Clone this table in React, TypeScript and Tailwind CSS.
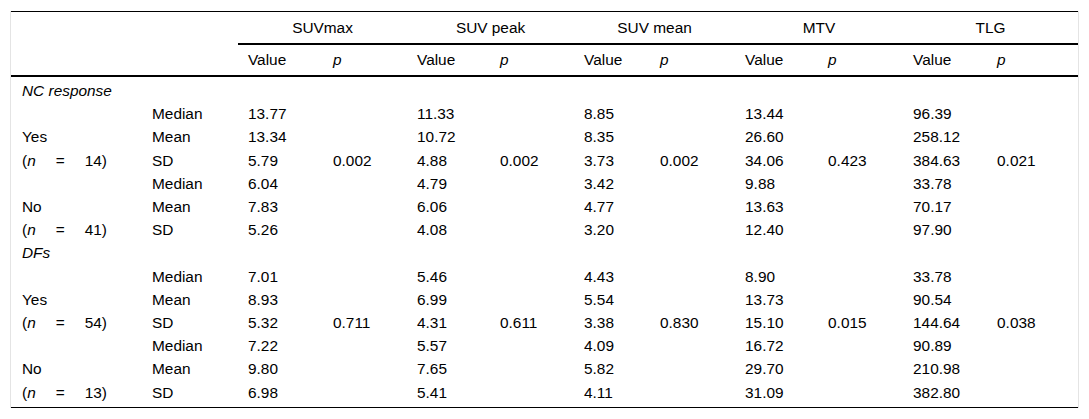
import React from "react";

type Row = { label?: React.ReactNode; stat: string; values: string[]; p?: string[] };

const N = ({ n }: { n: string }) => (
  <span className="inline-flex gap-5">
    <span>
      (<i>n</i>
    </span>
    <span>=</span>
    <span>{n})</span>
  </span>
);

const sections: { title: string; rows: Row[] }[] = [
  {
    title: "NC response",
    rows: [
      { stat: "Median", values: ["13.77", "11.33", "8.85", "13.44", "96.39"] },
      { label: "Yes", stat: "Mean", values: ["13.34", "10.72", "8.35", "26.60", "258.12"] },
      {
        label: <N n="14" />,
        stat: "SD",
        values: ["5.79", "4.88", "3.73", "34.06", "384.63"],
        p: ["0.002", "0.002", "0.002", "0.423", "0.021"],
      },
      { stat: "Median", values: ["6.04", "4.79", "3.42", "9.88", "33.78"] },
      { label: "No", stat: "Mean", values: ["7.83", "6.06", "4.77", "13.63", "70.17"] },
      { label: <N n="41" />, stat: "SD", values: ["5.26", "4.08", "3.20", "12.40", "97.90"] },
    ],
  },
  {
    title: "DFs",
    rows: [
      { stat: "Median", values: ["7.01", "5.46", "4.43", "8.90", "33.78"] },
      { label: "Yes", stat: "Mean", values: ["8.93", "6.99", "5.54", "13.73", "90.54"] },
      {
        label: <N n="54" />,
        stat: "SD",
        values: ["5.32", "4.31", "3.38", "15.10", "144.64"],
        p: ["0.711", "0.611", "0.830", "0.015", "0.038"],
      },
      { stat: "Median", values: ["7.22", "5.57", "4.09", "16.72", "90.89"] },
      { label: "No", stat: "Mean", values: ["9.80", "7.65", "5.82", "29.70", "210.98"] },
      { label: <N n="13" />, stat: "SD", values: ["6.98", "5.41", "4.11", "31.09", "382.80"] },
    ],
  },
];

const groups = ["SUVmax", "SUV peak", "SUV mean", "MTV", "TLG"];

export default function App() {
  return (
    <div className="min-h-screen bg-white pt-[11px] font-['Liberation_Sans',Arial,sans-serif] text-[15.4px] text-black">
      <div className="ml-[10px] w-[1069px] border-x border-[#e4e4e4]">
        <table className="w-[1067px] table-fixed border-separate border-spacing-0 border-y border-black">
          <colgroup>
            <col className="w-[131px]" />
            <col className="w-[96px]" />
            <col className="w-[85px]" />
            <col className="w-[84px]" />
            <col className="w-[83px]" />
            <col className="w-[84px]" />
            <col className="w-[76px]" />
            <col className="w-[85px]" />
            <col className="w-[83px]" />
            <col className="w-[85px]" />
            <col className="w-[84px]" />
            <col className="w-[91px]" />
          </colgroup>
          <thead>
            <tr>
              <th rowSpan={2} colSpan={2} className="border-b-2 border-black p-0" />
              {groups.map((g) => (
                <th key={g} colSpan={2} className="h-[33px] border-b-2 border-black p-0 text-center font-normal">
                  {g}
                </th>
              ))}
            </tr>
            <tr>
              {groups.map((g) => (
                <React.Fragment key={g}>
                  <th className="h-[32px] border-b-2 border-black p-0 pl-[10px] text-left font-normal">Value</th>
                  <th className="h-[32px] border-b-2 border-black p-0 pl-[10px] text-left font-normal italic">p</th>
                </React.Fragment>
              ))}
            </tr>
          </thead>
          <tbody>
            <tr>
              <td colSpan={12} className="h-[2px] p-0" />
            </tr>
            {sections.map((s) => (
              <React.Fragment key={s.title}>
                <tr>
                  <td colSpan={12} className="h-[23.2px] p-0 pl-[11px] italic leading-[23.2px]">
                    {s.title}
                  </td>
                </tr>
                {s.rows.map((r, i) => (
                  <tr key={i}>
                    <td className="h-[23.2px] p-0 pl-[11px] leading-[23.2px] whitespace-nowrap">{r.label}</td>
                    <td className="p-0 pl-[10px] leading-[23.2px]">{r.stat}</td>
                    {r.values.map((v, j) => (
                      <React.Fragment key={j}>
                        <td className="p-0 pl-[10px] leading-[23.2px]">{v}</td>
                        <td className="p-0 pl-[10px] leading-[23.2px]">{r.p ? r.p[j] : ""}</td>
                      </React.Fragment>
                    ))}
                  </tr>
                ))}
              </React.Fragment>
            ))}
            <tr>
              <td colSpan={12} className="h-[3px] p-0" />
            </tr>
          </tbody>
        </table>
      </div>
    </div>
  );
}
